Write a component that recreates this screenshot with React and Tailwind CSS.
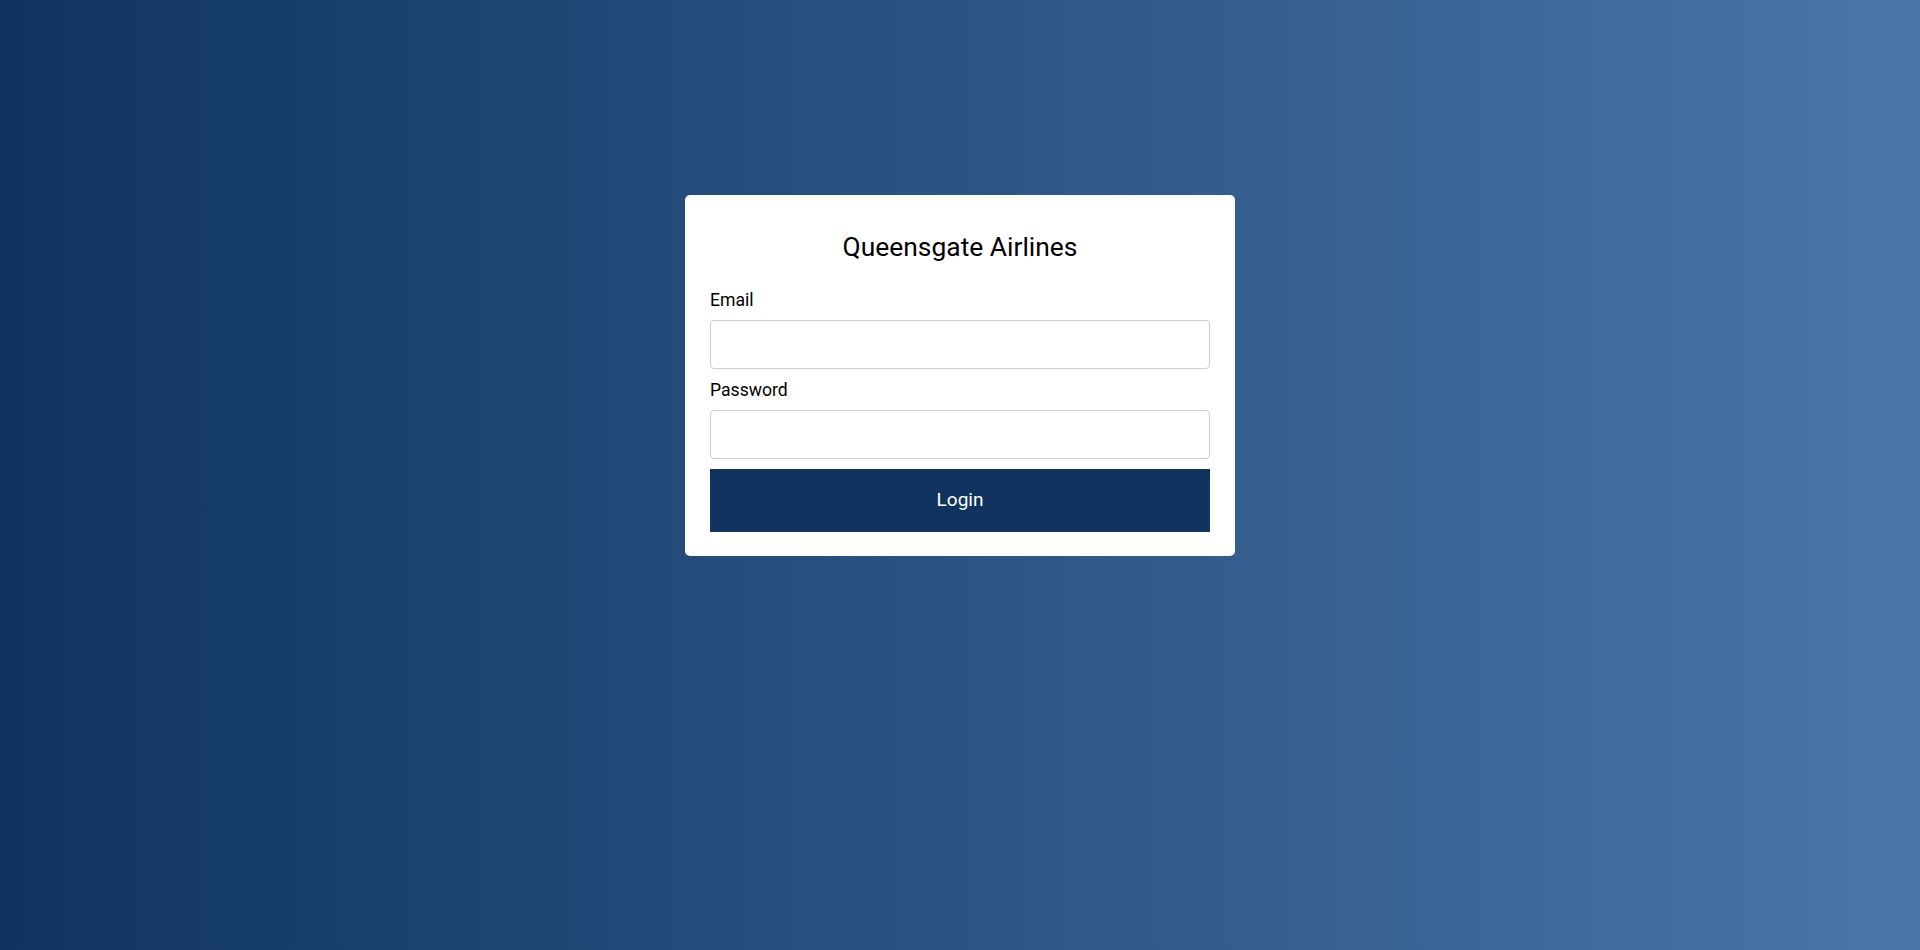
export default function App() {
  return (
    <div
      className="min-h-[950px] w-full bg-gradient-to-r from-[#0f3460] to-[#4a76a8] pt-[195px]"
      style={{ fontFamily: 'Roboto, "Liberation Sans", sans-serif' }}
    >
      <div className="mx-auto w-[550px] rounded-[5px] bg-white px-[25px] pt-[37px] pb-[24px]">
        <h1 className="text-center text-[26.4px] leading-[30px] text-black">Queensgate Airlines</h1>

        <form className="mt-[28px]" onSubmit={(e) => e.preventDefault()}>
          <label className="block text-[17.6px] leading-[21px] text-black">Email</label>
          <input
            type="email"
            className="mt-[9px] block h-[49px] w-full rounded-[4px] border border-[#cccccc] px-3 outline-none"
          />

          <label className="mt-[11px] block text-[17.6px] leading-[21px] text-black">Password</label>
          <input
            type="password"
            className="mt-[9px] block h-[49px] w-full rounded-[4px] border border-[#cccccc] px-3 outline-none"
          />

          <button
            type="submit"
            className="mt-[10px] block h-[63px] w-full bg-[#10345f] text-[19px] text-white"
          >
            Login
          </button>
        </form>
      </div>
    </div>
  );
}
